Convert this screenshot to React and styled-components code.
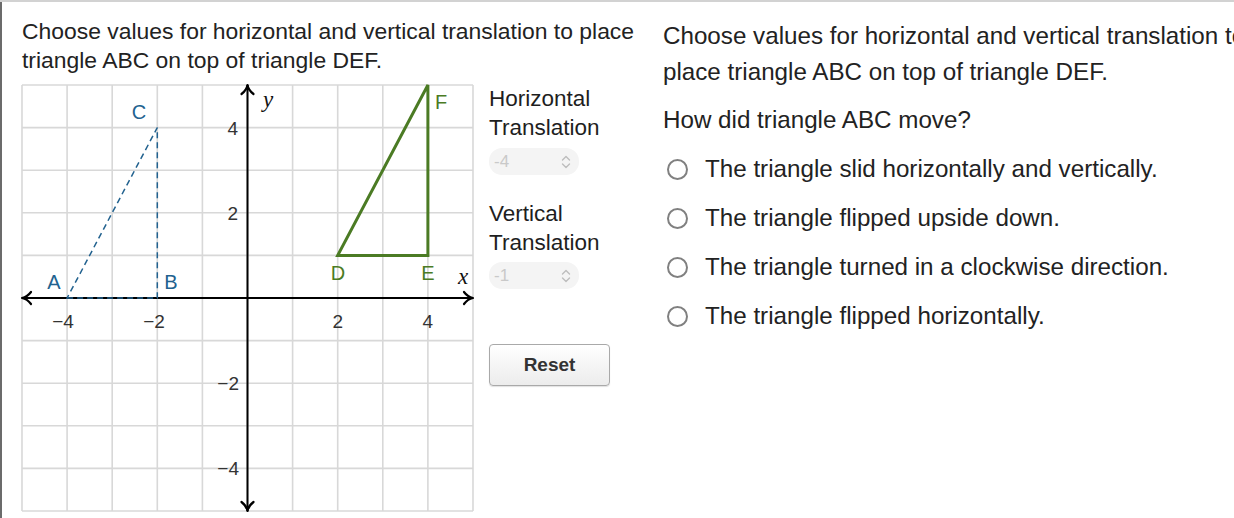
import React from "react";
import styled, { createGlobalStyle } from "styled-components";

const Global = createGlobalStyle`
  html, body { margin: 0; padding: 0; background: #fff; overflow: hidden; }
  body { font-family: "Liberation Sans", Arial, sans-serif; color: #222; }
`;

const Page = styled.div`
  display: flex;
  width: 1234px;
  height: 516px;
  border-top: 2px solid #d2d2d2;
  overflow: hidden;
`;

const LeftPanel = styled.section`
  flex-shrink: 0;
  width: 628px;
  border-left: 2px solid #6b6b6b;
  padding: 15px 0 0 20px;
`;

const Prompt = styled.p`
  margin: 0;
  width: 630px;
  font-size: 22.9px;
  line-height: 29px;
  color: #222;
`;

const Workspace = styled.div`
  display: flex;
  align-items: flex-start;
  gap: 16px;
  margin-top: 10px;
`;

const GraphSvg = styled.svg`
  display: block;
  overflow: visible;
  flex-shrink: 0;
`;

const Controls = styled.div`
  display: flex;
  flex-direction: column;
  align-items: flex-start;
  width: 124px;
  margin-top: -1px;
`;

const FieldLabel = styled.div`
  font-size: 22.5px;
  line-height: 29px;
  color: #1e1e1e;
  margin-top: ${(p) => p.$gap || 0}px;
`;

const Spinner = styled.div`
  display: flex;
  align-items: center;
  justify-content: space-between;
  box-sizing: border-box;
  width: 90px;
  height: 27px;
  margin-top: ${(p) => p.$gap || 0}px;
  padding: 0 8px 0 5px;
  border-radius: 13px;
  background: #f4f4f4;
  color: #c9c9c9;
  font-size: 17px;
`;

const ResetButton = styled.button`
  margin-top: 55px;
  width: 121px;
  height: 42px;
  border: 1px solid #a9a9a9;
  border-radius: 4px;
  background: linear-gradient(#ffffff, #ececec);
  font-family: "Liberation Sans", Arial, sans-serif;
  font-weight: bold;
  font-size: 19px;
  color: #333;
  box-shadow: 0 1px 1px rgba(0, 0, 0, 0.12);
`;

const RightPanel = styled.section`
  flex-shrink: 0;
  width: 620px;
  margin-left: 13px;
  padding-top: 16px;
`;

const Text = styled.p`
  margin: ${(p) => p.$top || 0}px 0 0;
  width: 600px;
  font-size: 24.2px;
  line-height: 36px;
  color: #222;
`;

const Options = styled.ul`
  list-style: none;
  margin: 13px 0 0;
  padding: 0;
  display: flex;
  flex-direction: column;
  gap: 13px;
`;

const Option = styled.li`
  display: flex;
  align-items: center;
  gap: 17px;
  height: 36px;
  font-size: 24.2px;
  color: #222;
`;

const Radio = styled.span`
  box-sizing: border-box;
  width: 21px;
  height: 21px;
  margin-left: 4px;
  border: 2px solid #808080;
  border-radius: 50%;
  flex-shrink: 0;
`;

const UX = 45.1;
const UY = 42.6;
const W = UX * 10;
const H = UY * 10;
const px = (x) => (x + 5) * UX;
const py = (y) => (5 - y) * UY;

const BLUE = "#22628f";
const GREEN = "#4b7b24";

function Arrow({ x, y, rot }) {
  return (
    <path
      d="M-9,-6 C-6,-2 -3,-0.5 0,0 C-3,0.5 -6,2 -9,6"
      transform={`translate(${x},${y}) rotate(${rot})`}
      fill="none"
      stroke="#000"
      strokeWidth="2.2"
      strokeLinejoin="round"
      strokeLinecap="round"
    />
  );
}

function Graph() {
  const lines = [];
  for (let i = -5; i <= 5; i++) {
    lines.push(<line key={"v" + i} x1={px(i)} y1={0} x2={px(i)} y2={H} stroke="#d8d8d8" strokeWidth="1.6" />);
    lines.push(<line key={"h" + i} x1={0} y1={py(i)} x2={W} y2={py(i)} stroke="#d8d8d8" strokeWidth="1.6" />);
  }
  const tick = { fontFamily: "'Liberation Sans', Arial, sans-serif", fontSize: 19, fill: "#333" };
  const pt = { fontFamily: "'Liberation Sans', Arial, sans-serif", fontSize: 20 };
  const ax = { fontFamily: "'Liberation Serif', 'Times New Roman', serif", fontStyle: "italic", fontSize: 23, fill: "#111" };
  return (
    <GraphSvg width={W} height={H} viewBox={`0 0 ${W} ${H}`}>
      {lines}
      <line x1={0} y1={py(0)} x2={W} y2={py(0)} stroke="#000" strokeWidth="2" />
      <line x1={px(0)} y1={0} x2={px(0)} y2={H} stroke="#000" strokeWidth="2" />
      <Arrow x={0} y={py(0)} rot={180} />
      <Arrow x={W} y={py(0)} rot={0} />
      <Arrow x={px(0)} y={0} rot={-90} />
      <Arrow x={px(0)} y={H} rot={90} />

      <text x={41} y={243} {...tick} textAnchor="middle">−4</text>
      <text x={132} y={243} {...tick} textAnchor="middle">−2</text>
      <text x={px(2)} y={243} {...tick} textAnchor="middle">2</text>
      <text x={px(4)} y={243} {...tick} textAnchor="middle">4</text>
      <text x={216} y={py(4) + 7} {...tick} textAnchor="end">4</text>
      <text x={216} y={py(2) + 7} {...tick} textAnchor="end">2</text>
      <text x={217} y={py(-2) + 7} {...tick} textAnchor="end">−2</text>
      <text x={217} y={py(-4) + 7} {...tick} textAnchor="end">−4</text>

      <text x={246} y={22} {...ax} textAnchor="middle">y</text>
      <text x={441} y={199} {...ax} textAnchor="middle">x</text>

      <polygon
        points={`${px(-4)},${py(0)} ${px(-2)},${py(0)} ${px(-2)},${py(4)}`}
        fill="none"
        stroke={BLUE}
        strokeWidth="1.5"
        strokeDasharray="6 4"
      />
      <polygon
        points={`${px(2)},${py(1)} ${px(4)},${py(1)} ${px(4)},${py(5)}`}
        fill="none"
        stroke={GREEN}
        strokeWidth="3"
        strokeLinejoin="miter"
      />

      <text x={117} y={34} {...pt} fill={BLUE} textAnchor="middle">C</text>
      <text x={32} y={204} {...pt} fill={BLUE} textAnchor="middle">A</text>
      <text x={149} y={204} {...pt} fill={BLUE} textAnchor="middle">B</text>
      <text x={316} y={195} {...pt} fill={GREEN} textAnchor="middle">D</text>
      <text x={406} y={195} {...pt} fill={GREEN} textAnchor="middle">E</text>
      <text x={419} y={24} {...pt} fill={GREEN} textAnchor="middle">F</text>
    </GraphSvg>
  );
}

function UpDown() {
  return (
    <svg width="10" height="14" viewBox="0 0 10 14">
      <path d="M1.5,5 L5,1.5 L8.5,5 M1.5,9 L5,12.5 L8.5,9" fill="none" stroke="#bdbdbd" strokeWidth="1.4" strokeLinecap="round" strokeLinejoin="round" />
    </svg>
  );
}

const options = [
  "The triangle slid horizontally and vertically.",
  "The triangle flipped upside down.",
  "The triangle turned in a clockwise direction.",
  "The triangle flipped horizontally.",
];

export default function App() {
  return (
    <>
      <Global />
      <Page>
        <LeftPanel>
          <Prompt>Choose values for horizontal and vertical translation to place triangle ABC on top of triangle DEF.</Prompt>
          <Workspace>
            <Graph />
            <Controls>
              <FieldLabel>Horizontal Translation</FieldLabel>
              <Spinner $gap={6}>
                <span>-4</span>
                <UpDown />
              </Spinner>
              <FieldLabel $gap={24}>Vertical Translation</FieldLabel>
              <Spinner $gap={5}>
                <span>-1</span>
                <UpDown />
              </Spinner>
              <ResetButton>Reset</ResetButton>
            </Controls>
          </Workspace>
        </LeftPanel>
        <RightPanel>
          <Text>Choose values for horizontal and vertical translation to place triangle ABC on top of triangle DEF.</Text>
          <Text $top={12}>How did triangle ABC move?</Text>
          <Options>
            {options.map((o) => (
              <Option key={o}>
                <Radio />
                <span>{o}</span>
              </Option>
            ))}
          </Options>
        </RightPanel>
      </Page>
    </>
  );
}
